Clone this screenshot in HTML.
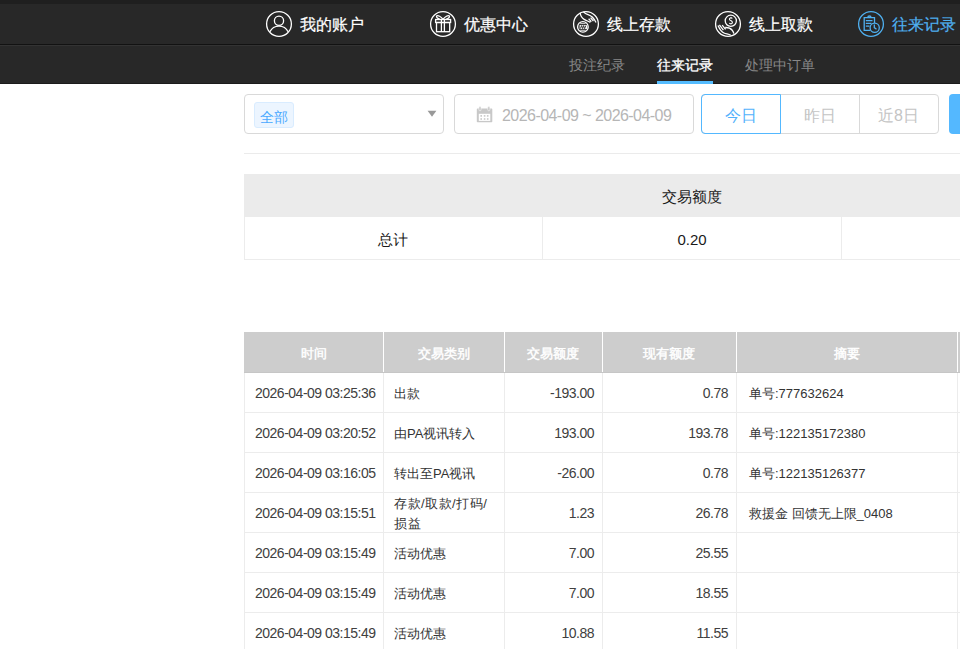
<!DOCTYPE html>
<html><head><meta charset="utf-8">
<style>
*{margin:0;padding:0;box-sizing:border-box}
html,body{width:960px;height:649px;overflow:hidden;background:#fff;font-family:"Liberation Sans",sans-serif;color:#333}
.abs{position:absolute}
#top{position:absolute;left:0;top:0;width:960px;height:84px;background:#282828}
#top .strip{position:absolute;left:0;top:0;width:960px;height:4px;background:#1f1f1f}
#top .l1{position:absolute;left:0;top:44px;width:960px;height:1px;background:#121212}
#top .l2{position:absolute;left:0;top:45px;width:960px;height:1px;background:#333}
#top .l3{position:absolute;left:0;top:83px;width:960px;height:1px;background:#1b1b1b}
.nav{position:absolute;top:9px;height:30px}
.nav svg{position:absolute;left:0;top:0;width:30px;height:30px}
.nav span{position:absolute;left:36px;top:7px;font-size:16px;font-weight:normal;-webkit-text-stroke:0.2px currentColor;color:#fff;white-space:nowrap;line-height:18px}
.sub{position:absolute;top:57px;font-size:14px;line-height:16px;color:#888;white-space:nowrap}
.box{position:absolute;border:1px solid #d9d9d9;background:#fff}
.cell{position:absolute;font-size:13px;line-height:15px;white-space:nowrap;color:#333}
.hl{position:absolute;height:1px;background:#ececec}
.vl{position:absolute;width:1px;background:#ececec}
.th{position:absolute;top:334px;height:40px;display:flex;align-items:center;justify-content:center;font-size:13px;font-weight:normal;-webkit-text-stroke:0.45px #fff;color:#fff;white-space:nowrap}
.td{position:absolute;height:39px;display:flex;align-items:center;padding:2px 11px 0;font-size:13px;line-height:19.5px;color:#333;white-space:nowrap}
.td .n{font-size:14px;letter-spacing:-0.5px;color:#404040}
.td.c5{padding-left:13px}
.td.r{justify-content:flex-end;padding-right:8px}
</style></head><body>
<div id="top">
  <div class="strip"></div>
  <div class="l1"></div><div class="l2"></div><div class="l3"></div>

  <div class="nav" style="left:264px">
    <svg viewBox="0 0 30 30" fill="none" stroke="#fff" stroke-width="1.3">
      <circle cx="15" cy="15" r="12.4"/>
      <circle cx="15" cy="11.8" r="4.6"/>
      <path d="M5.9 22.8 A10.1 10.1 0 0 1 24.1 22.8"/>
    </svg>
    <span>我的账户</span>
  </div>
  <div class="nav" style="left:428px">
    <svg viewBox="0 0 30 30" fill="none" stroke="#fff" stroke-width="1.3">
      <circle cx="15" cy="15" r="12.4"/>
      <rect x="7.6" y="10.5" width="15" height="3"/>
      <rect x="8.5" y="13.5" width="13.2" height="9.2"/>
      <path d="M13.4 10.5V22.7M16.4 10.5V22.7"/>
      <path d="M14.8 10 C13 8 10 5.6 8.6 7 C8 8 9.5 9.6 12 10.3"/>
      <path d="M15.2 10 C17 8 20 5.6 21.4 7 C22 8 20.5 9.6 18 10.3"/>
    </svg>
    <span>优惠中心</span>
  </div>
  <div class="nav" style="left:571px">
    <svg viewBox="0 0 30 30" fill="none" stroke="#fff" stroke-width="1.3">
      <circle cx="15" cy="15" r="12.4"/>
      <circle cx="11.9" cy="17.9" r="5.3"/>
      <rect x="8.6" y="16.1" width="7.6" height="3.8" fill="#fff" stroke="none"/>
      <path d="M9.4 19.6 L10.6 16.6 L11.6 19.6 L12.6 16.6 L13.6 19.6 L14.8 16.6" stroke="#282828" stroke-width="0.9"/>
      <path d="M9.2 14.6 H14.6 M9.2 21.3 H14.6" stroke-width="0.8"/>
      <path d="M9.2 3.7 C9.4 6.5 10.4 8.6 13.2 10.4 C15.2 11.6 17.2 12.2 19.4 13.4 M12.5 2.8 C14 4.6 15 5 17 5.6 C19.6 6.4 22.8 8.6 25 13.4 M17.6 9.8 L20.4 12.6 M19.6 8.6 L22.4 12.2 M21.2 7.8 L23.4 11"/>
    </svg>
    <span>线上存款</span>
  </div>
  <div class="nav" style="left:713px">
    <svg viewBox="0 0 30 30" fill="none" stroke="#fff" stroke-width="1.3">
      <circle cx="15" cy="15" r="12.4"/>
      <circle cx="17.8" cy="11.8" r="5.6"/>
      <path d="M19.3 9.6 C18.8 8.6 16.4 8.6 16.4 10.2 C16.4 11.8 19.4 11.4 19.4 13.4 C19.4 15 17 15 16.3 14 M17.9 8 V8.8 M17.9 14.8 V15.6" stroke-width="1.1"/>
      <path d="M5 16.4 C6.4 19.5 8.5 22.8 11 24 C13 25 15.5 25 17.8 26.3 M6.4 15.9 L10.4 21.2 M9.2 16.2 L12.6 20.4 M12.2 18.5 C15 18.4 17.4 19 19 21 C20 22.2 20.6 23.6 20.9 24.6"/>
    </svg>
    <span>线上取款</span>
  </div>
  <div class="nav" style="left:856px">
    <svg viewBox="0 0 30 30" fill="none" stroke="#4fb0f0" stroke-width="1.3">
      <circle cx="15" cy="15" r="12.4"/>
      <path d="M14.3 21.3 H8.2 V8.6 H18.5 V13.9"/>
      <path d="M11.8 8.6 A1.6 1.6 0 0 1 15 8.6"/>
      <path d="M9.8 11.6 H16.5 M9.8 14.3 H15.5 M9.8 17.1 H13.5"/>
      <circle cx="18.7" cy="18.7" r="4.6"/>
      <path d="M18.3 15.6 V18.6 L20.5 20.3"/>
    </svg>
    <span style="color:#4fb0f0">往来记录</span>
  </div>

  <div class="sub" style="left:569px">投注纪录</div>
  <div class="sub" style="left:657px;color:#fff;-webkit-text-stroke:0.3px #fff">往来记录</div>
  <div class="abs" style="left:657px;top:81px;width:56px;height:3px;background:#54bcff"></div>
  <div class="sub" style="left:745px">处理中订单</div>
</div>

<!-- filters -->
<div class="box" style="left:244px;top:94px;width:200px;height:40px;border-radius:4px"></div>
<div class="abs" style="left:254px;top:102px;width:40px;height:26px;background:#ecf5ff;border:1px solid #d9ecff;border-radius:3px"></div>
<div class="abs" style="left:260px;top:109px;font-size:14px;line-height:16px;color:#4aa9ff">全部</div>
<svg class="abs" style="left:427px;top:110px" width="10" height="8" viewBox="0 0 10 8"><path d="M0.6 0.8 H9.4 L5 6.8Z" fill="#999"/></svg>

<div class="box" style="left:454px;top:94px;width:240px;height:40px;border-radius:4px"></div>
<svg class="abs" style="left:472px;top:102px" width="24" height="24" viewBox="0 0 24 24">
  <path d="M5.4 6.6 H19.6 Q20.3 6.6 20.3 7.3 V19.6 Q20.3 20.3 19.6 20.3 H5.5 Q4.8 20.3 4.8 19.6 V7.3 Q4.8 6.6 5.5 6.6Z" fill="#c8c8c8"/>
  <rect x="6.8" y="11.8" width="11.5" height="7.1" fill="#fff"/>
  <rect x="6.9" y="4.6" width="2.2" height="4.2" rx="1.1" fill="#c8c8c8" stroke="#fff" stroke-width="0.5"/>
  <rect x="15.7" y="4.6" width="2.2" height="4.2" rx="1.1" fill="#c8c8c8" stroke="#fff" stroke-width="0.5"/>
  <g fill="#c8c8c8"><rect x="8.4" y="13.1" width="1.6" height="1.6"/><rect x="11.8" y="13.1" width="1.6" height="1.6"/><rect x="14.9" y="13.1" width="1.6" height="1.6"/><rect x="8.4" y="16.2" width="1.6" height="1.6"/><rect x="11.8" y="16.2" width="1.6" height="1.6"/><rect x="14.9" y="16.2" width="1.6" height="1.6"/></g>
</svg>
<div class="abs" style="left:502px;top:107px;font-size:16px;line-height:18px;letter-spacing:-0.55px;color:#b6b6b6;white-space:nowrap">2026-04-09 ~ 2026-04-09</div>

<div class="box" style="left:701px;top:94px;width:238px;height:40px;border-radius:4px"></div>
<div class="abs" style="left:859px;top:95px;width:1px;height:38px;background:#d9d9d9"></div>
<div class="abs" style="left:701px;top:94px;width:80px;height:40px;border:1px solid #54b8ff;border-radius:4px 0 0 4px"></div>
<div class="abs" style="left:725px;top:107px;font-size:16px;line-height:18px;color:#52b2fc">今日</div>
<div class="abs" style="left:804px;top:107px;font-size:16px;line-height:18px;color:#c4c4c4">昨日</div>
<div class="abs" style="left:878px;top:107px;font-size:16px;line-height:18px;color:#c4c4c4">近8日</div>
<div class="abs" style="left:949px;top:94px;width:20px;height:40px;background:#54b8ff;border-radius:4px"></div>

<div class="hl" style="left:244px;top:153px;width:716px;background:#ebebeb"></div>

<!-- summary table -->
<div class="abs" style="left:244px;top:174px;width:716px;height:43px;background:#ebebeb"></div>
<div class="abs" style="left:542px;width:300px;top:188px;text-align:center;font-size:15px;line-height:17px;color:#1a1a1a">交易额度</div>
<div class="vl" style="left:244px;top:217px;height:42px"></div>
<div class="vl" style="left:542px;top:217px;height:42px"></div>
<div class="vl" style="left:841px;top:217px;height:42px"></div>
<div class="hl" style="left:244px;top:259px;width:716px"></div>
<div class="abs" style="left:244px;width:298px;top:231px;text-align:center;font-size:15px;line-height:17px;color:#1a1a1a">总计</div>
<div class="abs" style="left:542px;width:300px;top:231px;text-align:center;font-size:15px;line-height:17px;color:#1a1a1a">0.20</div>

<!-- main table -->
<div id="tbl">
<div class="abs" style="left:244px;top:332px;width:716px;height:41px;background:#cdcdcd"></div>
<div class="abs" style="left:244px;top:372px;width:716px;height:1px;background:#c6c6c6"></div>
<div class="abs" style="left:383px;top:332px;width:1px;height:40px;background:#fff"></div>
<div class="abs" style="left:504px;top:332px;width:1px;height:40px;background:#fff"></div>
<div class="abs" style="left:602px;top:332px;width:1px;height:40px;background:#fff"></div>
<div class="abs" style="left:736px;top:332px;width:1px;height:40px;background:#fff"></div>
<div class="abs" style="left:957px;top:332px;width:1px;height:40px;background:#fff"></div>
<div class="th" style="left:244px;width:139px">时间</div>
<div class="th" style="left:383px;width:121px">交易类别</div>
<div class="th" style="left:504px;width:98px">交易额度</div>
<div class="th" style="left:602px;width:134px">现有额度</div>
<div class="th" style="left:736px;width:221px">摘要</div>
<div class="hl" style="left:244px;top:412px;width:716px"></div>
<div class="td" style="left:244px;width:139px;top:373px"><span class="n">2026-04-09 03:25:36</span></div>
<div class="td" style="left:383px;width:121px;top:373px">出款</div>
<div class="td r" style="left:504px;width:98px;top:373px"><span class="n">-193.00</span></div>
<div class="td r" style="left:602px;width:134px;top:373px"><span class="n">0.78</span></div>
<div class="td c5" style="left:736px;width:221px;top:373px">单号:777632624</div>
<div class="hl" style="left:244px;top:452px;width:716px"></div>
<div class="td" style="left:244px;width:139px;top:413px"><span class="n">2026-04-09 03:20:52</span></div>
<div class="td" style="left:383px;width:121px;top:413px">由PA视讯转入</div>
<div class="td r" style="left:504px;width:98px;top:413px"><span class="n">193.00</span></div>
<div class="td r" style="left:602px;width:134px;top:413px"><span class="n">193.78</span></div>
<div class="td c5" style="left:736px;width:221px;top:413px">单号:122135172380</div>
<div class="hl" style="left:244px;top:492px;width:716px"></div>
<div class="td" style="left:244px;width:139px;top:453px"><span class="n">2026-04-09 03:16:05</span></div>
<div class="td" style="left:383px;width:121px;top:453px">转出至PA视讯</div>
<div class="td r" style="left:504px;width:98px;top:453px"><span class="n">-26.00</span></div>
<div class="td r" style="left:602px;width:134px;top:453px"><span class="n">0.78</span></div>
<div class="td c5" style="left:736px;width:221px;top:453px">单号:122135126377</div>
<div class="hl" style="left:244px;top:532px;width:716px"></div>
<div class="td" style="left:244px;width:139px;top:493px"><span class="n">2026-04-09 03:15:51</span></div>
<div class="td" style="left:383px;width:121px;top:493px"><span style="letter-spacing:0.5px">存款/取款/打码/<br>损益</span></div>
<div class="td r" style="left:504px;width:98px;top:493px"><span class="n">1.23</span></div>
<div class="td r" style="left:602px;width:134px;top:493px"><span class="n">26.78</span></div>
<div class="td c5" style="left:736px;width:221px;top:493px">救援金 回馈无上限_0408</div>
<div class="hl" style="left:244px;top:572px;width:716px"></div>
<div class="td" style="left:244px;width:139px;top:533px"><span class="n">2026-04-09 03:15:49</span></div>
<div class="td" style="left:383px;width:121px;top:533px">活动优惠</div>
<div class="td r" style="left:504px;width:98px;top:533px"><span class="n">7.00</span></div>
<div class="td r" style="left:602px;width:134px;top:533px"><span class="n">25.55</span></div>
<div class="td c5" style="left:736px;width:221px;top:533px"></div>
<div class="hl" style="left:244px;top:612px;width:716px"></div>
<div class="td" style="left:244px;width:139px;top:573px"><span class="n">2026-04-09 03:15:49</span></div>
<div class="td" style="left:383px;width:121px;top:573px">活动优惠</div>
<div class="td r" style="left:504px;width:98px;top:573px"><span class="n">7.00</span></div>
<div class="td r" style="left:602px;width:134px;top:573px"><span class="n">18.55</span></div>
<div class="td c5" style="left:736px;width:221px;top:573px"></div>
<div class="hl" style="left:244px;top:652px;width:716px"></div>
<div class="td" style="left:244px;width:139px;top:613px"><span class="n">2026-04-09 03:15:49</span></div>
<div class="td" style="left:383px;width:121px;top:613px">活动优惠</div>
<div class="td r" style="left:504px;width:98px;top:613px"><span class="n">10.88</span></div>
<div class="td r" style="left:602px;width:134px;top:613px"><span class="n">11.55</span></div>
<div class="td c5" style="left:736px;width:221px;top:613px"></div>
<div class="vl" style="left:244px;top:373px;height:276px"></div>
<div class="vl" style="left:383px;top:373px;height:276px"></div>
<div class="vl" style="left:504px;top:373px;height:276px"></div>
<div class="vl" style="left:602px;top:373px;height:276px"></div>
<div class="vl" style="left:736px;top:373px;height:276px"></div>
<div class="vl" style="left:957px;top:373px;height:276px"></div>
</div><!--/tbl-->
</body></html>
